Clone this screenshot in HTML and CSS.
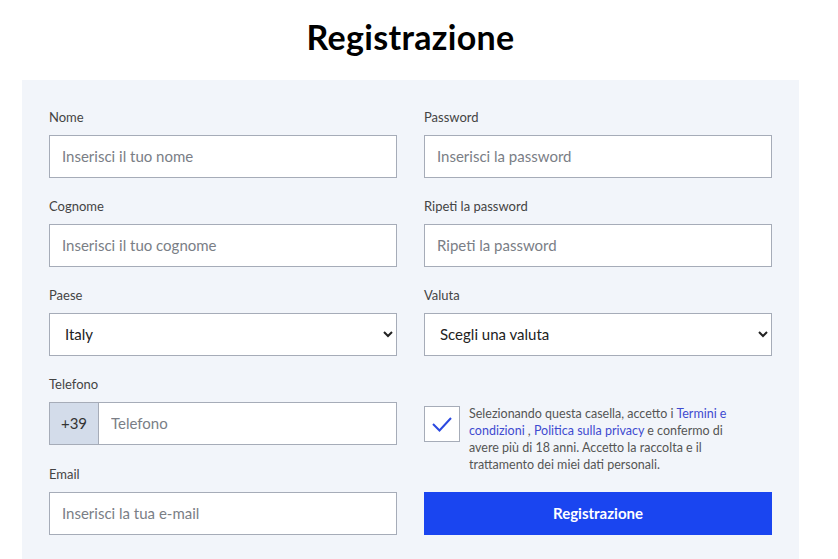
FILE: index.html
```html
<!DOCTYPE html>
<html>
<head>
<meta charset="utf-8" />
<title>Registrazione</title>
<link rel="stylesheet" href="styles.css">
</head>
<body>
<div class="page">
<h1 class="title">Registrazione</h1>
<div class="panel">
	<form class="regForm">
		<div class="col">
			<div class="field">
				<label>Nome</label>
				<input type="text" placeholder="Inserisci il tuo nome">
			</div>
			<div class="field">
				<label>Cognome</label>
				<input type="text" placeholder="Inserisci il tuo cognome">
			</div>
			<div class="field">
				<label>Paese</label>
				<select><option>Italy</option></select>
			</div>
			<div class="field phoneField">
				<label>Telefono</label>
				<div class="phone">
					<span class="prefix">+39</span>
					<input type="tel" placeholder="Telefono">
				</div>
			</div>
			<div class="field">
				<label>Email</label>
				<input type="email" placeholder="Inserisci la tua e-mail">
			</div>
		</div>
		<div class="col">
			<div class="field">
				<label>Password</label>
				<input type="password" placeholder="Inserisci la password">
			</div>
			<div class="field">
				<label>Ripeti la password</label>
				<input type="password" placeholder="Ripeti la password">
			</div>
			<div class="field">
				<label>Valuta</label>
				<select><option>Scegli una valuta</option></select>
			</div>
			<div class="agree">
				<span class="check">
					<svg width="22" height="18" viewBox="0 0 22 18"><path d="M2 9 L8.5 15.5 L20 3" fill="none" stroke="#2b49e0" stroke-width="2"/></svg>
				</span>
				<p>Selezionando questa casella, accetto i <a href="#">Termini e condizioni</a> , <a href="#">Politica sulla privacy</a> e confermo di avere più di 18 anni. Accetto la raccolta e il trattamento dei miei dati personali.</p>
			</div>
			<button type="submit" class="submitBtn">Registrazione</button>
		</div>
	</form>
</div>
</div>
</body>
</html>
```

FILE: styles.css
```css
body{ margin: 0; background: #fff; font-family: Lato, "Open Sans", sans-serif; color: #222; }
.page{ width: 821px; }
.title{ margin: 0; height: 80px; line-height: 74px; text-align: center; font-size: 34px; font-weight: 700; color: #000; letter-spacing: 0.3px; }
.panel{ margin: 0 22px; background: #f2f5fa; padding: 28px 27px 30px; box-sizing: border-box; }
.regForm{ display: grid; grid-template-columns: 348px 348px; column-gap: 27px; margin: 0; }
.col{ display: flex; flex-direction: column; }
.field{ display: flex; flex-direction: column; margin-bottom: 19px; }
.field.phoneField{ margin-bottom: 20px; }
.col .field:last-child{ margin-bottom: 0; }
.field label{ font-size: 13px; line-height: 18px; color: #444; margin-bottom: 9px; }
.field input, .field select{ height: 43px; box-sizing: border-box; border: 1px solid #a6acb8; background: #fff; font-family: inherit; font-size: 15px; padding: 0 12px 2px; color: #222; border-radius: 0; outline: none; }
.field select{ padding: 0 8px 2px 11px; }
.field input::placeholder{ color: #7a7e86; }
.phone{ display: flex; height: 43px; }
.phone .prefix{ width: 49px; box-sizing: border-box; border: 1px solid #a6acb8; border-right: none; background: #d3dcea; font-size: 15px; color: #333; display: flex; align-items: center; justify-content: center; padding-bottom: 2px; }
.phone input{ flex: 1; height: 43px; }
.agree{ display: flex; margin-top: 30px; gap: 9px; align-items: flex-start; }
.check{ flex: none; width: 36px; height: 36px; box-sizing: border-box; border: 1px solid #a6acb8; background: #fff; display: flex; align-items: center; justify-content: center; margin-top: 1px; }
.agree p{ margin: 0; font-size: 12.5px; line-height: 17px; color: #555; width: 285px; }
.agree a{ color: #3f4bd0; text-decoration: none; }
.submitBtn{ margin-top: 19px; height: 43px; border: none; background: #1a45f0; color: #fff; font-family: inherit; font-size: 15px; font-weight: 700; cursor: pointer; padding-bottom: 3px; }
```
